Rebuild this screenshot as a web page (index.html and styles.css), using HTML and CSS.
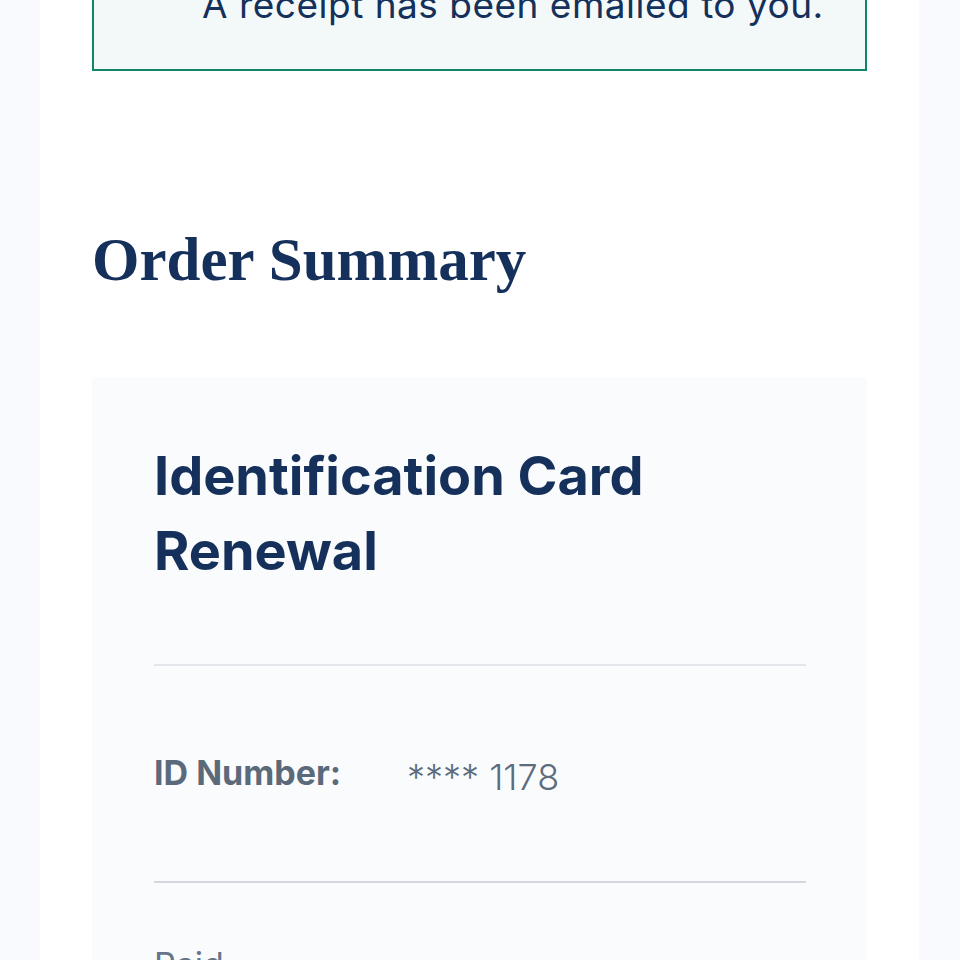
FILE: index.html
```html
<!DOCTYPE html>
<html lang="en">
<head>
    <meta charset="UTF-8">
    <meta name="viewport" content="width=device-width, initial-scale=1.0">
    <title>Order Confirmation</title>
    <link rel="stylesheet" href="styles.css">
</head>
<body>
    <main class="page">
        <div class="alert">
            <h2 class="alert-title">Payment complete</h2>
            <p class="alert-text">A receipt has been emailed to you.</p>
        </div>

        <h1 class="section-title">Order Summary</h1>

        <section class="card">
            <h3 class="card-title">Identification Card Renewal</h3>
            <div class="row">
                <span class="label">ID Number:</span>
                <span class="value">**** 1178</span>
            </div>
            <div class="row stacked">
                <span class="label light">Paid</span>
                <span class="value">$32.00</span>
            </div>
        </section>
    </main>
</body>
</html>
```

FILE: styles.css
```css
body {
    margin: 0;
    background-color: #f9fafd;
    font-family: 'Inter', 'Noto Sans', sans-serif;
    color: #15305a;
}

.page {
    width: 775px;
    margin: -121px 0 0 40px;
    padding: 0 52px 80px;
    background-color: #ffffff;
}

.alert {
    border: 2px solid #0f866a;
    background-color: #f3f9f9;
    padding: 30px 20px 38px 108px;
}

.alert-title {
    margin: 0;
    font-size: 30px;
    line-height: 42px;
    font-weight: 700;
}

.alert-text {
    margin: 26px 0 0;
    font-size: 37px;
    line-height: 1.4;
    letter-spacing: 0.5px;
    white-space: nowrap;
}

.section-title {
    margin: 152px 0 81px;
    font-family: 'Liberation Serif', 'Times New Roman', serif;
    font-size: 61px;
    line-height: 1.2;
    font-weight: 700;
}

.card {
    background-color: #fafbfd;
    border-radius: 4px;
    padding: 61px 61px 40px 62px;
}

.card-title {
    margin: 0 0 76px;
    font-size: 54px;
    line-height: 75px;
    font-weight: 700;
}

.row {
    display: flex;
    align-items: flex-start;
    border-top: 2px solid #e2e5e9;
    padding: 87px 0 82px;
}

.row.stacked {
    flex-direction: column;
    gap: 16px;
    border-top-color: #d3d8de;
    padding-top: 62px;
}

.label {
    width: 253px;
    font-size: 34px;
    line-height: 1.2;
    font-weight: 700;
    color: #5a6a7b;
}

.label.light {
    font-weight: 400;
    color: #66758a;
}

.value {
    margin-top: 3px;
    font-size: 36px;
    line-height: 1.2;
    font-weight: 300;
    color: #5d6c7c;
}
```
